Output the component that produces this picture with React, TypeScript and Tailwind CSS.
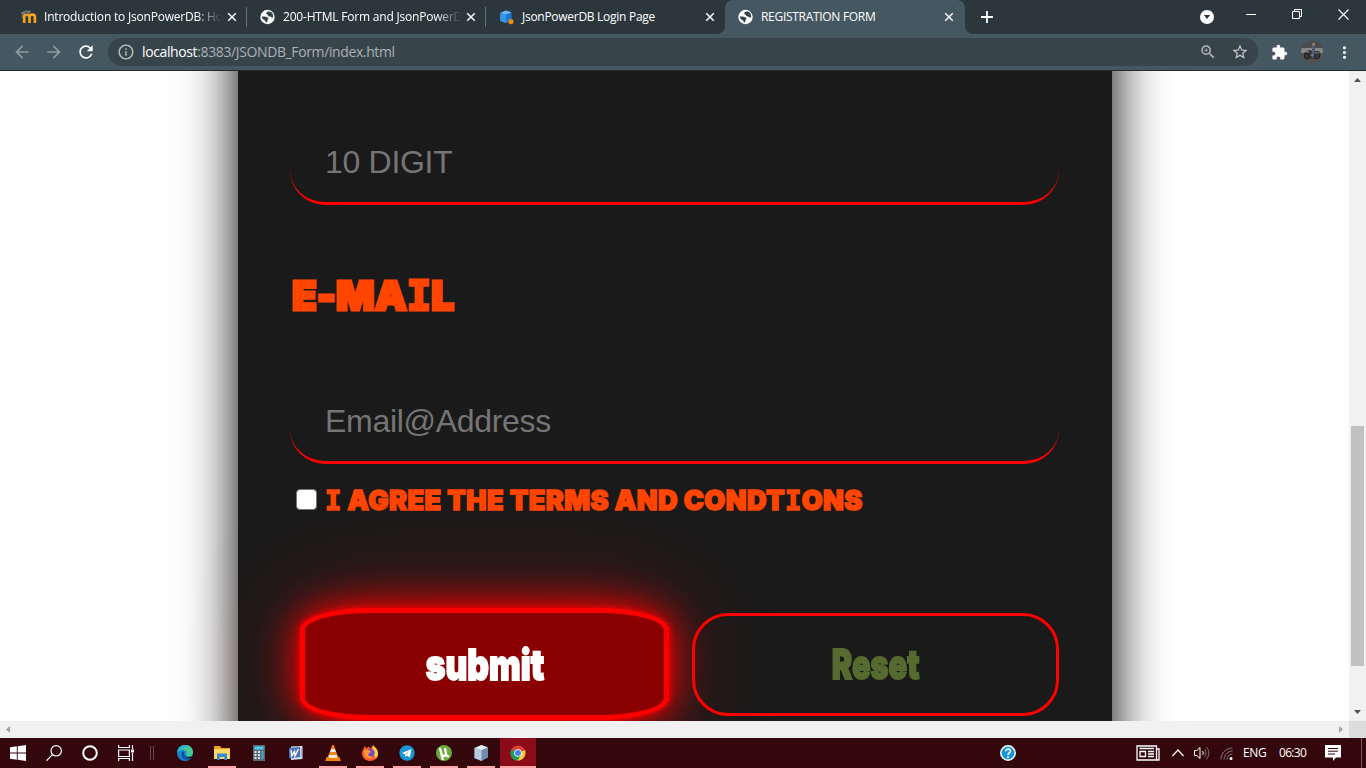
import type { ReactNode } from "react";
import {
  MdArrowBack,
  MdArrowForward,
  MdRefresh,
  MdInfoOutline,
  MdZoomIn,
  MdStarBorder,
  MdExtension,
  MdMoreVert,
} from "react-icons/md";

function Globe() {
  return (
    <svg viewBox="0 0 16 16" className="size-4 shrink-0">
      <circle cx="7.5" cy="8" r="7.2" fill="#fff" />
      <path d="M8.2 2.4 6.4 3.6 6.2 5 8 5.8 8.2 7.2 10.4 7.4 11.4 8.6 13.200 8.400 13.1 6 12 3.800 10 2.500ZM1.8 7.4 4.6 7.600 7.3 8.300 8.600 9.600 7.600 10.700 7.200 13.600 5.600 13.300 5.400 11.700 3.600 10.800 2.300 9.400Z" fill="#34424a" />
    </svg>
  );
}

function Moodle() {
  return (
    <svg viewBox="0 0 16 16" className="size-4 shrink-0">
      <path d="M3.200 14V7.400C3.200 5.400 7.400 5 8.300 7.200 9.200 5 13.900 5 13.900 8V14M8.500 14V7.500" fill="none" stroke="#f7a21b" strokeWidth="2.700" />
      <path d="M.5 4 5 2 9.500 2.300 6 5.400ZM1.200 4V9" fill="#5b5145" stroke="#b9b2a6" strokeWidth=".6" />
    </svg>
  );
}

function Database() {
  return (
    <svg viewBox="0 0 16 16" className="size-4 shrink-0">
      <path d="M1.200 4 6.700 1.400 12.500 3.300V11.500L7.200 14 1.200 12Z" fill="#1976d2" />
      <path d="M1.200 4 6.700 1.400 12.500 3.300 7.200 5.600Z" fill="#70b7f2" />
      <path d="M1.200 4 7.200 5.600V14L1.200 12Z" fill="#3596e8" />
      <circle cx="11.900" cy="12.600" r="2.600" fill="#f28a13" />
    </svg>
  );
}

function Cross() {
  return (
    <svg viewBox="0 0 10 10" className="size-2.5 shrink-0">
      <path d="m1.200 1.200 7.600 7.600m0-7.600L1.200 8.800" stroke="#f1f3f4" strokeWidth="1.600" />
    </svg>
  );
}

function Tab({ icon, title, active, divider, fade, tracking }: { icon: ReactNode; title: string; active?: boolean; divider?: boolean; fade?: boolean; tracking: string }) {
  return (
    <div className={`relative flex h-[34px] shrink-0 items-center pl-[13px] ${active ? "w-[240px] rounded-t-lg bg-[#455761]" : "w-[239px]"}`}>
      {icon}
      <span className={`ml-[7px] w-[180px] whitespace-nowrap font-['Open_Sans',sans-serif] text-[12px] text-white ${tracking} ${fade ? "[mask-image:linear-gradient(to_right,#000_152px,transparent_178px)]" : ""}`}>{title}</span>
      <span className="ml-[3px] flex"><Cross /></span>
      {divider && <span className="absolute right-0 top-[7px] h-5 w-px bg-[#65727a]" />}
      {active && (
        <>
          <svg viewBox="0 0 8 8" className="absolute -left-2 bottom-0 size-2"><path d="M8 0v8H0a8 8 0 0 0 8-8" fill="#455761" /></svg>
          <svg viewBox="0 0 8 8" className="absolute -right-2 bottom-0 size-2"><path d="M0 0v8h8a8 8 0 0 1-8-8" fill="#455761" /></svg>
        </>
      )}
    </div>
  );
}

function TabStrip() {
  return (
    <div className="flex h-[34px] bg-[#2c373d] pl-2">
      <Tab icon={<Moodle />} title="Introduction to JsonPowerDB: Ho" divider fade tracking="tracking-[-0.2px]" />
      <Tab icon={<Globe />} title="200-HTML Form and JsonPowerD" divider fade tracking="tracking-[-0.2px]" />
      <Tab icon={<Database />} title="JsonPowerDB Login Page" tracking="tracking-[-0.28px]" />
      <Tab icon={<Globe />} title="REGISTRATION FORM" active tracking="tracking-[-0.3px]" />
      <svg viewBox="0 0 12 12" className="ml-[16px] mt-[11px] size-3"><path d="M6 0v12M0 6h12" stroke="#fff" strokeWidth="1.800" /></svg>
      <div className="ml-auto flex items-start">
        <svg viewBox="0 0 14 14" className="mr-[32px] mt-[10px] size-3.5"><circle cx="7" cy="7" r="7" fill="#fff" /><path d="M3.800 5h6.400L7 9Z" fill="#2c373d" /></svg>
        <svg viewBox="0 0 11 11" className="mr-[35px] mt-[9px] size-[11px]"><path d="M0 5.500h10" stroke="#fff" /></svg>
        <svg viewBox="0 0 11 11" className="mr-[35px] mt-[9px] size-[11px]"><path d="M.5 2.500h7v7h-7zM2.500 2V.5h7v7H8" fill="none" stroke="#fff" /></svg>
        <svg viewBox="0 0 11 11" className="mr-[17px] mt-[9px] size-[11px]"><path d="m.5.5 10 10m0-10-10 10" stroke="#fff" strokeWidth="1.100" /></svg>
      </div>
    </div>
  );
}

function Avatar() {
  return (
    <svg viewBox="0 0 22 22" className="size-[22px]">
      <clipPath id="face"><circle cx="11" cy="11" r="11" /></clipPath>
      <g clipPath="url(#face)">
        <path d="M0 0h22v22H0z" fill="#4b4b4b" />
        <path d="M0 7h22v5H0z" fill="#858786" />
        <path d="M0 12h22v10H0z" fill="#57534f" />
        <path d="M3 12 8 9 12 10 18 10 20 14 17 18H5Z" fill="#353a3c" />
        <path d="M11 5h3v6l-1 6h-2z" fill="#4c5d72" />
        <circle cx="12.500" cy="3.300" r="1.500" fill="#a08066" />
        <circle cx="6" cy="15" r="2.600" fill="none" stroke="#222" strokeWidth="1.100" />
        <circle cx="16" cy="15" r="2.600" fill="none" stroke="#222" strokeWidth="1.100" />
        <path d="M5 11h3M14 12h4M9 14h4" stroke="#aaa" strokeWidth=".7" />
      </g>
    </svg>
  );
}

function Toolbar() {
  return (
    <div className="flex h-[37px] items-center border-b border-[#252a2e] bg-[#455761] pl-[12px]">
      <MdArrowBack className="size-5 text-[#8f9aa0]" />
      <MdArrowForward className="ml-[12px] size-5 text-[#8f9aa0]" />
      <MdRefresh className="ml-[12px] size-5 text-white" />
      <div className="ml-[12px] flex h-7 w-[1150px] items-center rounded-full bg-[#38444b] pl-[9px] pr-[9px]">
        <MdInfoOutline className="size-[18px] text-[#b4bbbf]" />
        <span className="ml-[7px] font-['Open_Sans',sans-serif] text-[14px] leading-5 tracking-[-0.38px] text-[#aab1b5]"><span className="text-white">localhost</span>:8383/JSONDB_Form/index.html</span>
        <MdZoomIn className="ml-auto size-[18px] text-[#b4bbbf]" />
        <MdStarBorder className="ml-[14px] size-[18px] text-[#c4cacd]" />
      </div>
      <MdExtension className="ml-[13px] size-[17px] text-white" />
      <span className="ml-[13px]"><Avatar /></span>
      <MdMoreVert className="ml-3 size-[19px] text-white" />
    </div>
  );
}

function Field({ placeholder }: { placeholder: string }) {
  return (
    <input
      placeholder={placeholder}
      className="block h-[85px] w-full rounded-[35px] border-b-[3px] border-[#f00] bg-transparent pl-[35px] pt-[3px] font-['Liberation_Sans',Arial,sans-serif] text-[32px] tracking-[-0.3px] text-white outline-none placeholder:text-[#757575]"
    />
  );
}

function SlabI() {
  return <span className="font-['DejaVu_Sans_Mono',monospace] font-bold">I</span>;
}

function FormPage() {
  return (
    <main className="h-[650px] w-[1349px] overflow-hidden bg-white">
      <section className="-mt-[80px] ml-[238px] h-[860px] w-[874px] bg-[#1a1a1a] pl-[52px] pr-[53px] pt-[129px] shadow-[0_0_52px_#000]">
        <Field placeholder="10 DIGIT" />
        <div className="flex h-[174px] items-start pt-[59px]">
          <h2 className="ml-0.5 origin-left whitespace-nowrap font-['Inter',sans-serif] text-[40px] font-black leading-[63px] tracking-[0.3px] text-[#ff4500] [-webkit-text-stroke:3px_#ff4500]">E-MA<SlabI />L</h2>
        </div>
        <Field placeholder="Email@Address" />
        <label className="flex h-[70px] items-center">
          <input type="checkbox" className="ml-[6px] size-[21px] shrink-0 appearance-none rounded-[4px] border-[1.5px] border-[#767676] bg-white" />
          <span className="ml-[8px] mt-[3px] origin-left whitespace-nowrap font-['Inter',sans-serif] text-[27px] font-black leading-8 tracking-[0.45px] text-[#ff4500] [-webkit-text-stroke:1.5px_#ff4500]"><SlabI /> AGREE THE TERMS AND CONDT<SlabI />ONS</span>
        </label>
        <div className="mt-[74px] flex items-start">
          <button className="ml-[10px] h-[112px] w-[369px] shrink-0 rounded-[70px/22px] border-[5px] border-[#f00] bg-[#8b0000] font-['Inter',sans-serif] text-[42px] font-black text-white shadow-[0_0_6px_#f00,0_0_36px_2px_#f00,0_0_95px_#ff000080]">
            <span className="inline-block scale-x-[0.8] [-webkit-text-stroke:1.8px_#fff]">submit</span>
          </button>
          <button className="relative ml-[23px] mt-[5px] h-[103px] w-[367px] shrink-0 rounded-[36px] border-[3px] border-[#f00] font-['Inter',sans-serif] text-[41px] font-black text-[#556b2f]">
            <span className="inline-block scale-x-[0.75] [-webkit-text-stroke:1.8px_#556b2f]">Reset</span>
          </button>
        </div>
      </section>
    </main>
  );
}

function VerticalScroll() {
  return (
    <div className="flex w-[17px] flex-col items-center bg-[#f1f1f1]">
      <svg viewBox="0 0 17 17" className="size-[17px]"><path d="m5 11 3.500-4 3.500 4z" fill="#505050" /></svg>
      <div className="mt-[338px] h-[240px] w-[13px] bg-[#c1c1c1]" />
      <svg viewBox="0 0 17 17" className="mt-auto size-[17px]"><path d="m5 6 3.500 4L12 6z" fill="#505050" /></svg>
    </div>
  );
}

function HorizontalScroll() {
  return (
    <div className="flex h-[17px] bg-[#f1f1f1]">
      <svg viewBox="0 0 17 17" className="size-[17px]"><path d="M10 5v7L6 8.500z" fill="#a3a3a3" /></svg>
      <svg viewBox="0 0 17 17" className="ml-auto size-[17px]"><path d="M7 5v7l4-3.500z" fill="#a3a3a3" /></svg>
      <div className="size-[17px] bg-[#dcdcdc]" />
    </div>
  );
}

function TaskCell({ children, open, active }: { children: ReactNode; open?: boolean; active?: boolean }) {
  return (
    <div className={`flex h-[30px] shrink-0 flex-col items-center pt-[7px] ${active ? "ml-px w-9 bg-[#8c0b18]" : "w-[37px]"}`}>
      <svg viewBox="0 0 16 16" className="size-4">{children}</svg>
      {open && <span className={`mt-auto h-0.5 bg-[#ffa6aa] ${active ? "w-9" : "w-7"}`} />}
    </div>
  );
}

function SystemCell({ children }: { children: ReactNode }) {
  return (
    <div className="flex h-[30px] w-9 shrink-0 justify-center pt-[7px]">
      <svg viewBox="0 0 16 16" className="size-4" fill="none" stroke="#fff" strokeWidth="1.200">{children}</svg>
    </div>
  );
}

function Taskbar() {
  return (
    <footer className="flex h-[30px] bg-[#33070c] text-white">
      <SystemCell><path d="M0 2.200 6.800 1.300V7.500H0ZM7.700 1.200 16 0V7.500H7.700ZM0 8.500H6.800V14.700L0 13.800ZM7.700 8.500H16V16L7.700 14.800Z" fill="#fff" stroke="none" /></SystemCell>
      <SystemCell><circle cx="10.200" cy="5.800" r="5.200" /><path d="M6.500 9.700.5 15.700" /></SystemCell>
      <SystemCell><circle cx="8" cy="8" r="6.800" strokeWidth="2" /></SystemCell>
      <SystemCell><path d="M.6 0v2.500h10.800V0M.6 5h10.800v6.500H.6zM.6 16v-2.500h10.800V16M14.500 0v4M14.500 8v8" /><path d="M13 4.500h3v3h-3z" fill="#fff" stroke="none" /></SystemCell>
      <div className="flex w-[22px] gap-[2px] pl-[6px] pt-[8px]"><span className="h-3.5 w-px bg-[#6b464a]" /><span className="h-3.5 w-px bg-[#6b464a]" /></div>
      <TaskCell>
        <circle cx="8" cy="8" r="8" fill="#1686cf" />
        <path d="M.2 7C1 2.500 4.400 0 8.300 0 13 0 16 3.300 16 7c0 3-2 4.600-4.600 4.600-2 0-3-1-2.300-2 1.500-2-.5-4.600-3.700-4.600C3 5 1 6 .2 7" fill="#43c993" />
        <path d="M.2 7C1 2.500 4.400 0 8.300 0 10 0 11 .4 12 1 8 1 6 3 5.400 5 3 5 1 6 .2 7" fill="#2fb0d8" />
        <path d="M5 7c-2.200 3 .3 8 5.500 7.800 2 0 3.500-1.300 4.200-2.500-3.600 1.700-8.400-.3-7.500-4.300C7.400 7 6 6 5 7" fill="#0c4f9f" />
        <path d="M9.200 9.500c-1 1.500 1 3.500 6.800 1.800v1.400c-3 1.300-8.500-.5-6.800-3.200Z" fill="#33070c" />
      </TaskCell>
      <TaskCell open>
        <path d="M0 1h6l1.500 2H16v11H0z" fill="#e8a30b" /><path d="M0 4h16v10H0z" fill="#fbd765" /><path d="M3 15V8.500h10V15h-2.800v-3H5.800v3z" fill="#3689d8" />
      </TaskCell>
      <TaskCell>
        <path d="M2 0h12v16H2z" fill="#5b6772" /><path d="M3.500 1.500h9v3h-9z" fill="#49cdf2" />
        <path d="M3.500 6h2v2h-2zm3.500 0h2v2H7zM3.500 9h2v2h-2zM7 9h2v2H7zm-3.500 3h2v2h-2zM7 12h2v2H7z" fill="#dce5eb" /><path d="M10.500 6h2v8h-2z" fill="#49a8db" />
      </TaskCell>
      <TaskCell>
        <path d="m3 1.500 11.500-.5v13L3 15z" fill="#d5e1f2" /><path d="m1 3 11-1v10L1 13.500z" fill="#4a70b5" />
        <path d="m3 5 .8 6L6.500 6.500 7 11l3.400-7" fill="none" stroke="#fff" strokeWidth="1.400" /><path d="M13.200 3v10" stroke="#9bb4d8" />
      </TaskCell>
      <TaskCell open>
        <path d="M7.200 0h1.600L13.500 13h-11z" fill="#f28517" /><path d="m6.300 4-1.200 3h5.800L9.700 4zM4 10l-.7 2.500h9.400L12 10z" fill="#eee" /><path d="M1.500 12h13l1.300 4H.2z" fill="#ef850f" /><path d="M4 12h8v1H4z" fill="#ffe0a9" />
      </TaskCell>
      <TaskCell open>
        <path d="M1 5 2.500 1 4.500 3 7 1.700l1.500 2L11 0c1 2 4.800 3.300 5 8.500C16 13 12.500 16 8 16S0 12.700 0 8.300C0 7 .3 6 1 5" fill="#ff592b" />
        <path d="M11 0c1 2 4.800 3.300 5 8.500 0 2-1 4-2 5L10 7z" fill="#ffcf37" />
        <circle cx="8.500" cy="8" r="4.200" fill="#7447d2" /><path d="M2 5h5l2 2-3 2 1 2 4 1c-3 3-8 1-9-2z" fill="#ff9828" />
      </TaskCell>
      <TaskCell open><circle cx="8" cy="8" r="7.700" fill="#1795d4" /><path d="m3 8 9.500-4-1.600 8.500-3-2-1.500 1.500-.4-2.700z" fill="#fff" /><path d="m6.200 9 4-3.300-3 4.300" fill="#8ab9d5" /></TaskCell>
      <TaskCell open><circle cx="8" cy="8" r="8" fill="#6aaa3b" /><path d="m4 3 1.500 6c.6 2.500 4 2.500 4.500 0L9 3m1 6c.3 2 1.500 2.500 3 2M5.200 8.500 7 15" fill="none" stroke="#fff" strokeWidth="2.300" /></TaskCell>
      <TaskCell open><path d="m1.500 3 7-3L15 2.500v10L8.500 16l-7-3z" fill="#708caf" /><path d="m1.500 3 7-3L15 2.500 8.500 5z" fill="#e8f0f7" /><path d="m1.500 3 7 2v11l-7-3z" fill="#b9ccdf" /></TaskCell>
      <TaskCell open active>
        <circle cx="8" cy="8" r="7.500" fill="#d94432" /><path d="M8 8 15 5c1.800 5-1.700 10.500-7.500 10.500z" fill="#f9ca3e" /><path d="M1.500 4.200 8 8l3 2-3.500 5.500C1.500 15.300-1.200 9 1.500 4.200" fill="#239b57" />
        <circle cx="8" cy="8" r="3.800" fill="#fff" /><circle cx="8" cy="8" r="3" fill="#4484ec" />
      </TaskCell>
      <svg viewBox="0 0 16 16" className="ml-auto mt-[7px] size-4 shrink-0"><circle cx="8" cy="8" r="7.200" fill="#1495dc" stroke="#fff" strokeWidth="1.500" /><path d="M5.700 6.200c0-3 5-2.600 4.700.1C10.300 7.900 8 8 8 10m0 1.200v1.700" fill="none" stroke="#fff" strokeWidth="1.700" /></svg>
      <svg viewBox="0 0 24 16" className="ml-[120px] mt-[7px] h-4 w-6 shrink-0" fill="none" stroke="#fff"><path d="M1 1h19.500v14H1zM20.500 4H23v11h-3M3.500 3.500h14.500M12 6.500h6M12 9h6M12 11.500h6" strokeWidth="1.300" /><path d="M4 6.500h5.500v5H4z" strokeWidth="1.300" /></svg>
      <svg viewBox="0 0 12 8" className="ml-3 mt-[11px] h-2 w-3 shrink-0"><path d="M.5 7 6 1l5.500 6" fill="none" stroke="#fff" strokeWidth="1.200" /></svg>
      <svg viewBox="0 0 16 14" className="ml-[10px] mt-2 h-3.5 w-4 shrink-0" fill="none"><path d="M.5 4.500h2.300L6 1.500v11L2.800 9.500H.5z" stroke="#fff" /><path d="M8.500 5c1 1.200 1 2.800 0 4" stroke="#fff" /><path d="M10.500 3c2 2.300 2 5.700 0 8m2-10c3 3.500 3 8.500 0 12" stroke="#8c7274" /></svg>
      <svg viewBox="0 0 13 13" className="ml-[10px] mt-[9px] size-[13px] shrink-0" fill="none" stroke="#8b7477"><path d="M1 12.500C1 6 6 1 12.500 1M4 12.500C4 8 8 4 12.500 4M7 12.500C7 9.500 9.500 7 12.500 7" /><circle cx="11" cy="11.500" r="1.500" fill="#fff" stroke="none" /></svg>
      <span className="ml-[10px] mt-[6px] w-6 whitespace-nowrap font-['Open_Sans',sans-serif] text-[12px] leading-[18px] tracking-[-0.4px]">ENG</span>
      <span className="ml-3 mt-[6px] w-[29px] whitespace-nowrap font-['Open_Sans',sans-serif] text-[12px] leading-[18px] tracking-[-0.7px]">06:30</span>
      <svg viewBox="0 0 16 16" className="ml-[17px] mt-[7px] size-4 shrink-0"><path d="M0 0h16v12.500h-5L8 16v-3.500H0z" fill="#fff" /><path d="M3 3.500h10M3 6.200h10M3 9h7" stroke="#33070c" /></svg>
      <span className="ml-5 mr-1 w-px shrink-0 bg-[#76595c]" />
    </footer>
  );
}

export default function App() {
  return (
    <div className="h-[768px] w-[1366px] overflow-hidden bg-white">
      <TabStrip />
      <Toolbar />
      <div className="flex h-[650px]"><FormPage /><VerticalScroll /></div>
      <HorizontalScroll />
      <Taskbar />
    </div>
  );
}
